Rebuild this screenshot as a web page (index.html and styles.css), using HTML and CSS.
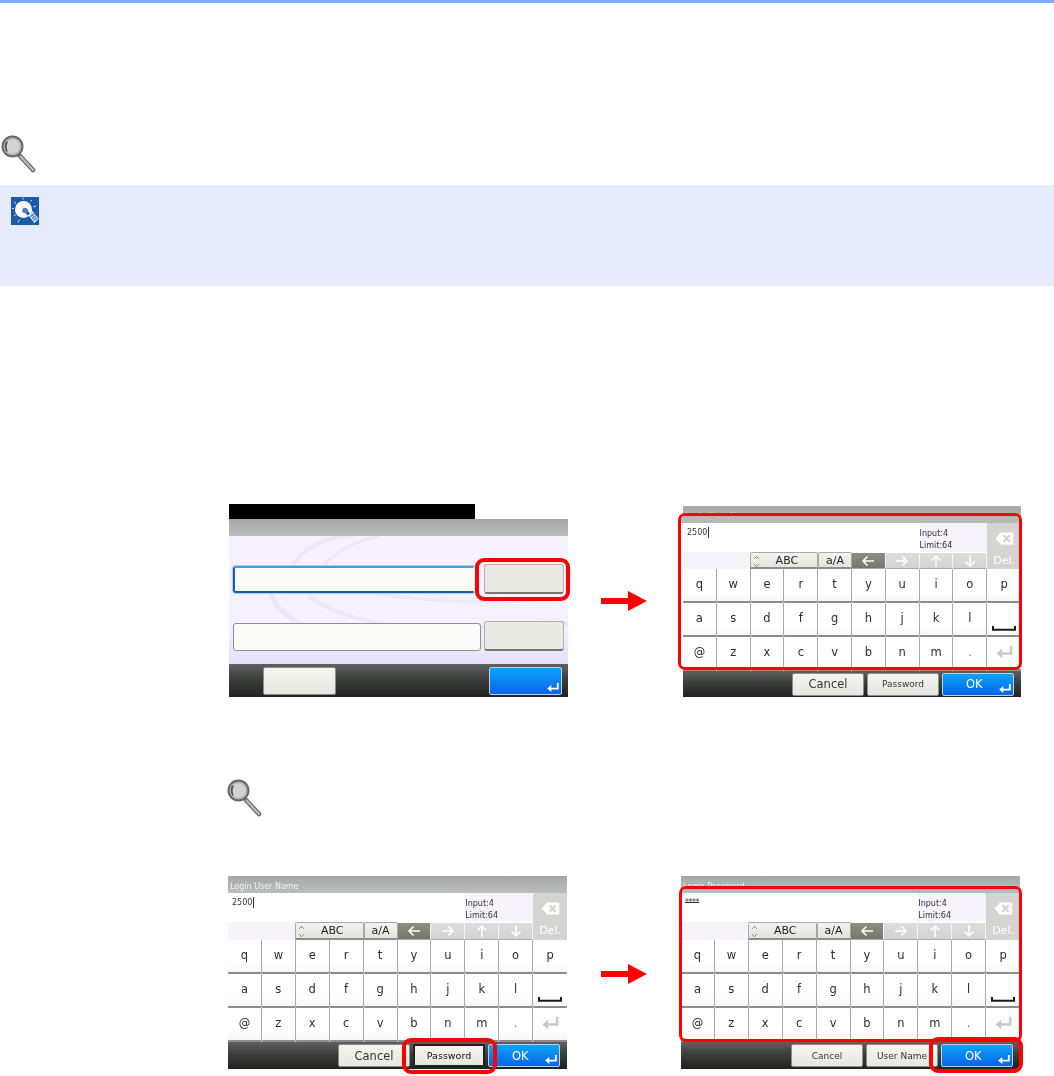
FILE: index.html
```html
<!DOCTYPE html>
<html lang="en">
<head>
<meta charset="utf-8">
<title>Login keyboard steps</title>
<link rel="stylesheet" href="styles.css">
</head>
<body>
<svg class="svg-defs" aria-hidden="true">
  <defs>
    <symbol id="loupe" viewBox="0 0 35 38">
      <path d="M19 21 L32 35" stroke="#666" stroke-width="4.600" stroke-linecap="round" fill="none"/>
      <path d="M19.500 21.500 L32 35" stroke="#bdbdbd" stroke-width="2.200" stroke-linecap="round" fill="none"/>
      <circle cx="11.500" cy="11.500" r="10" fill="#d2d2d2" stroke="#666" stroke-width="2"/>
      <circle cx="11.500" cy="11.500" r="8" fill="none" stroke="#a0a0a0" stroke-width="1"/>
      <path d="M6 6.500 Q3.500 11.500 6 16.500" stroke="#555" stroke-width="1.800" fill="none"/>
    </symbol>
    <symbol id="enter" viewBox="0 0 20 16">
      <path d="M17 1.500 V9.500 H5" fill="none" stroke="currentColor" stroke-width="2.600"/>
      <path d="M7.500 4.500 L1.500 9.500 L7.500 14.500 Z" fill="currentColor"/>
    </symbol>
    <symbol id="space" viewBox="0 0 24 5">
      <path d="M1 0 V3.800 H23 V0" fill="none" stroke="#1c1c1c" stroke-width="2"/>
    </symbol>
    <symbol id="backspace" viewBox="0 0 20 14">
      <path d="M6 0.500 H19.500 V13.500 H6 L0.500 7 Z" fill="#fff"/>
      <path d="M9 3.500 L15.500 10.500 M15.500 3.500 L9 10.500" stroke="#d3d4d0" stroke-width="2.200"/>
    </symbol>
    <symbol id="arrow-left" viewBox="0 0 14 12">
      <path d="M13 6 H2 M6.500 1.500 L2 6 L6.500 10.500" fill="none" stroke="currentColor" stroke-width="1.500"/>
    </symbol>
    <symbol id="arrow-right" viewBox="0 0 14 12">
      <path d="M1 6 H12 M7.500 1.500 L12 6 L7.500 10.500" fill="none" stroke="currentColor" stroke-width="1.500"/>
    </symbol>
    <symbol id="arrow-up" viewBox="0 0 12 14">
      <path d="M6 13 V2 M1.500 6.500 L6 2 L10.500 6.500" fill="none" stroke="currentColor" stroke-width="1.500"/>
    </symbol>
    <symbol id="arrow-down" viewBox="0 0 12 14">
      <path d="M6 1 V12 M1.500 7.500 L6 12 L10.500 7.500" fill="none" stroke="currentColor" stroke-width="1.500"/>
    </symbol>
    <symbol id="updown" viewBox="0 0 7 14">
      <path d="M1 4 L3.500 1.500 L6 4 M1 10 L3.500 12.500 L6 10" fill="none" stroke="#6f6f6f" stroke-width="1"/>
    </symbol>
    <symbol id="red-arrow" viewBox="0 0 46 20">
      <path d="M0 7 H27 V0 L46 10 L27 20 V13 H0 Z" fill="#f00"/>
    </symbol>
  </defs>
</svg>

<header class="top-bar"></header>

<svg class="loupe loupe-page"><use href="#loupe"/></svg>

<section class="note">
  <svg class="bulb" viewBox="0 0 28 28" aria-hidden="true">
    <rect width="28" height="28" fill="#1a5bab"/>
    <path d="M17 17 L23.500 25.500 L27 21.500 L20 13 Z" fill="#a9c2e4" stroke="#fff" stroke-width="1"/>
    <circle cx="12.500" cy="12.500" r="8.500" fill="#fff"/>
    <path d="M19.500 19.500 L24 16.500 M21 21.500 L25.500 18.500 M22.500 23.500 L26.500 20.500" stroke="#1a5bab" stroke-width=".8"/>
    <path d="M12.500 13.500 l2.500 -2 l4 5 l-2.500 2 Z" fill="#1a5bab"/>
    <circle cx="14" cy="13.500" r="2.800" fill="#4f80bf"/>
    <path d="M3 5 L5 6.500 M1 11.500 H3 M3 19 L5 17.500 M7 25.500 L8.500 22.500 M12 .5 V2.500 M21 3 L19.500 4.500 M25 9 L22.500 10" stroke="#d5e2f3" stroke-width="1"/>
  </svg>
</section>

<section class="step step-first">
  <div class="wrap">
    <div class="screen screen-login">
      <div class="login-head"><div class="login-black"></div></div>
      <div class="login-title"></div>
      <div class="login-body">
        <svg class="swirl" viewBox="0 0 339 128" preserveAspectRatio="none" aria-hidden="true">
          <g fill="none" stroke="#eee7fa">
            <path d="M60 55 C55 20 90 0 125 0" stroke-width="4"/>
            <path d="M85 50 C90 25 115 8 150 0" stroke-width="3"/>
            <path d="M40 55 C55 95 120 112 190 100 C250 90 310 85 339 88" stroke-width="5"/>
            <path d="M80 60 C120 90 190 95 250 90" stroke-width="4"/>
            <path d="M120 50 C160 65 260 70 339 62" stroke-width="3"/>
          </g>
        </svg>
        <div class="login-row">
          <div class="login-input login-input-focus"></div>
          <div class="login-btn"></div>
        </div>
        <div class="login-row">
          <div class="login-input"></div>
          <div class="login-btn"></div>
        </div>
      </div>
      <div class="footer footer-login">
        <div class="foot-btn foot-btn-login"></div>
        <div class="foot-btn foot-ok"><svg class="ok-enter"><use href="#enter"/></svg></div>
      </div>
    </div>
    <div class="frame frame-thick frame-login-btn"></div>
  </div>

  <svg class="red-arrow"><use href="#red-arrow"/></svg>

  <div class="wrap wrap-short">
    <div class="screen screen-short">
      <div class="title"><span class="title-text">Login User Name</span></div>
      <div class="kb-top">
        <div class="field"><span class="value">2500</span><span class="caret"></span></div>
        <div class="count">Input:4<br>Limit:64</div>
        <div class="del"><svg class="del-icon"><use href="#backspace"/></svg><span>Del.</span></div>
        <div class="blank"></div>
        <div class="tab tab-abc"><svg class="updown"><use href="#updown"/></svg>ABC</div>
        <div class="tab">a/A</div>
        <div class="nav nav-active"><svg class="nav-h"><use href="#arrow-left"/></svg></div>
        <div class="nav"><svg class="nav-h"><use href="#arrow-right"/></svg></div>
        <div class="nav"><svg class="nav-v"><use href="#arrow-up"/></svg></div>
        <div class="nav"><svg class="nav-v"><use href="#arrow-down"/></svg></div>
      </div>
      <div class="keys">
        <div class="key">q</div><div class="key">w</div><div class="key">e</div><div class="key">r</div><div class="key">t</div><div class="key">y</div><div class="key">u</div><div class="key">i</div><div class="key">o</div><div class="key">p</div>
        <div class="key">a</div><div class="key">s</div><div class="key">d</div><div class="key">f</div><div class="key">g</div><div class="key">h</div><div class="key">j</div><div class="key">k</div><div class="key">l</div><div class="key key-space"><svg class="space-icon"><use href="#space"/></svg></div>
        <div class="key">@</div><div class="key">z</div><div class="key">x</div><div class="key">c</div><div class="key">v</div><div class="key">b</div><div class="key">n</div><div class="key">m</div><div class="key key-dot">.</div><div class="key key-enter"><svg class="enter-icon"><use href="#enter"/></svg></div>
      </div>
      <div class="footer">
        <div class="foot-btn">Cancel</div>
        <div class="foot-btn foot-small">Password</div>
        <div class="foot-btn foot-ok">OK<svg class="ok-enter"><use href="#enter"/></svg></div>
      </div>
    </div>
    <div class="frame frame-keys-a"></div>
  </div>
</section>

<svg class="loupe loupe-step"><use href="#loupe"/></svg>

<section class="step step-second">
  <div class="wrap">
    <div class="screen">
      <div class="title"><span class="title-text">Login User Name</span></div>
      <div class="kb-top">
        <div class="field"><span class="value">2500</span><span class="caret"></span></div>
        <div class="count">Input:4<br>Limit:64</div>
        <div class="del"><svg class="del-icon"><use href="#backspace"/></svg><span>Del.</span></div>
        <div class="blank"></div>
        <div class="tab tab-abc"><svg class="updown"><use href="#updown"/></svg>ABC</div>
        <div class="tab">a/A</div>
        <div class="nav nav-active"><svg class="nav-h"><use href="#arrow-left"/></svg></div>
        <div class="nav"><svg class="nav-h"><use href="#arrow-right"/></svg></div>
        <div class="nav"><svg class="nav-v"><use href="#arrow-up"/></svg></div>
        <div class="nav"><svg class="nav-v"><use href="#arrow-down"/></svg></div>
      </div>
      <div class="keys">
        <div class="key">q</div><div class="key">w</div><div class="key">e</div><div class="key">r</div><div class="key">t</div><div class="key">y</div><div class="key">u</div><div class="key">i</div><div class="key">o</div><div class="key">p</div>
        <div class="key">a</div><div class="key">s</div><div class="key">d</div><div class="key">f</div><div class="key">g</div><div class="key">h</div><div class="key">j</div><div class="key">k</div><div class="key">l</div><div class="key key-space"><svg class="space-icon"><use href="#space"/></svg></div>
        <div class="key">@</div><div class="key">z</div><div class="key">x</div><div class="key">c</div><div class="key">v</div><div class="key">b</div><div class="key">n</div><div class="key">m</div><div class="key key-dot">.</div><div class="key key-enter"><svg class="enter-icon"><use href="#enter"/></svg></div>
      </div>
      <div class="footer">
        <div class="foot-btn">Cancel</div>
        <div class="foot-btn foot-small foot-selected">Password</div>
        <div class="foot-btn foot-ok">OK<svg class="ok-enter"><use href="#enter"/></svg></div>
      </div>
    </div>
    <div class="frame frame-thick frame-password"></div>
  </div>

  <svg class="red-arrow red-arrow-low"><use href="#red-arrow"/></svg>

  <div class="wrap wrap-last">
    <div class="screen">
      <div class="title"><span class="title-text">Login Password</span></div>
      <div class="kb-top">
        <div class="field"><span class="value value-stars">****</span></div>
        <div class="count">Input:4<br>Limit:64</div>
        <div class="del"><svg class="del-icon"><use href="#backspace"/></svg><span>Del.</span></div>
        <div class="blank"></div>
        <div class="tab tab-abc"><svg class="updown"><use href="#updown"/></svg>ABC</div>
        <div class="tab">a/A</div>
        <div class="nav nav-active"><svg class="nav-h"><use href="#arrow-left"/></svg></div>
        <div class="nav"><svg class="nav-h"><use href="#arrow-right"/></svg></div>
        <div class="nav"><svg class="nav-v"><use href="#arrow-up"/></svg></div>
        <div class="nav"><svg class="nav-v"><use href="#arrow-down"/></svg></div>
      </div>
      <div class="keys">
        <div class="key">q</div><div class="key">w</div><div class="key">e</div><div class="key">r</div><div class="key">t</div><div class="key">y</div><div class="key">u</div><div class="key">i</div><div class="key">o</div><div class="key">p</div>
        <div class="key">a</div><div class="key">s</div><div class="key">d</div><div class="key">f</div><div class="key">g</div><div class="key">h</div><div class="key">j</div><div class="key">k</div><div class="key">l</div><div class="key key-space"><svg class="space-icon"><use href="#space"/></svg></div>
        <div class="key">@</div><div class="key">z</div><div class="key">x</div><div class="key">c</div><div class="key">v</div><div class="key">b</div><div class="key">n</div><div class="key">m</div><div class="key key-dot">.</div><div class="key key-enter"><svg class="enter-icon"><use href="#enter"/></svg></div>
      </div>
      <div class="footer">
        <div class="foot-btn foot-small foot-cancel-small">Cancel</div>
        <div class="foot-btn foot-small">User Name</div>
        <div class="foot-btn foot-ok">OK<svg class="ok-enter"><use href="#enter"/></svg></div>
      </div>
    </div>
    <div class="frame frame-keys-b"></div>
    <div class="frame frame-thick frame-ok"></div>
  </div>
</section>
</body>
</html>
```

FILE: styles.css
```css
* { box-sizing: border-box; }

html, body { margin: 0; padding: 0; background: #fff; }

body {
  font-family: "DejaVu Sans", "Liberation Sans", sans-serif;
  color: #222;
  min-height: 1076px;
}

.svg-defs { display: block; width: 0; height: 0; }

.top-bar { height: 3px; background: #7fadf6; }

.loupe { display: block; width: 35px; height: 38px; }
.loupe-page { margin: 132px 0 0 1px; }
.loupe-step { margin: 82px 0 0 227px; }

.note {
  height: 101px;
  margin-top: 12px;
  padding: 12px 11px;
  background: #e6ecfb;
}
.bulb { display: block; width: 28px; height: 28px; }

.step { display: flex; align-items: flex-end; }
.step-first { margin-top: 218px; padding-left: 229px; height: 193px; }
.step-second { margin-top: 59px; padding-left: 228px; height: 193px; }

.wrap { position: relative; width: 339px; flex: none; }
.wrap-short { margin-left: 36px; width: 338px; }
.wrap-last { margin-left: 34px; }

.red-arrow { flex: none; width: 46px; height: 20px; margin: 0 0 86px 33px; }
.red-arrow-low { margin: 0 0 85px 34px; }

.screen {
  display: flex;
  flex-direction: column;
  width: 339px;
  height: 193px;
  background: #fff;
  filter: blur(.5px);
}
.screen-short { width: 338px; height: 191px; }

/* login screen */
.login-head { height: 15px; }
.login-black { width: 246px; height: 15px; background: #000; }
.login-title {
  height: 17px;
  background: linear-gradient(#a4a7a7, #bcbebd);
}
.login-body {
  position: relative;
  height: 128px;
  padding: 28px 4px 0 4px;
  display: flex;
  flex-direction: column;
  gap: 27px;
  background: linear-gradient(#f6f1ff 70%, #e6def8);
}
.swirl { position: absolute; inset: 0; width: 100%; height: 100%; }
.login-row { position: relative; display: flex; gap: 3px; height: 30px; align-items: stretch; }
.login-input {
  width: 248px;
  margin-top: 2px;
  border: 1px solid #8f8f8f;
  border-radius: 3px;
  background: #fbfbf9;
}
.login-input-focus {
  height: 27px;
  margin-right: 6px;
  width: 242px;
  border: 2px solid #0b5cc0;
  border-top-color: #2ba6e4;
  border-right-color: transparent;
  box-shadow: 0 0 0 1px #c3cbd6;
}
.login-btn {
  width: 80px;
  margin-left: auto;
  border: 1px solid #b3b3ae;
  border-bottom: 2px solid #777;
  border-radius: 3px;
  background: #eaeae4;
}

/* keyboard screens */
.title {
  height: 17px;
  padding: 5px 0 0 2px;
  background: linear-gradient(#a5a8a8, #bcbebd);
  color: #f2f2f2;
  font-size: 8px;
  line-height: 11px;
}
.title-text { display: block; white-space: nowrap; }

.kb-top {
  display: grid;
  grid-template-columns: repeat(10, 1fr);
  grid-template-rows: 29px 18px;
  background: #fff;
}
.screen-short .kb-top { grid-template-rows: 29px 17px; }

.field {
  grid-column: span 7;
  display: flex;
  align-items: flex-start;
  padding: 4px 0 0 4px;
  background: #fff;
  font-size: 8px;
  line-height: 11px;
  color: #333;
}
.value-stars { letter-spacing: -.5px; text-decoration: line-through; }
.caret { width: 1px; height: 11px; margin-left: 1px; background: #333; }

.count {
  grid-column: span 2;
  padding: 5px 0 0 0;
  background: #f7f3fb;
  font-size: 8px;
  line-height: 12px;
  color: #333;
}
.del {
  grid-column: 10;
  grid-row: 1 / span 2;
  display: flex;
  flex-direction: column;
  align-items: center;
  padding-top: 9px;
  background: #d4d5d1;
  color: #fff;
  font-size: 11px;
  line-height: 13px;
}
.del-icon { width: 19px; height: 13px; margin-bottom: 9px; flex: none; }

.blank { grid-column: span 2; background: #f7f3fb; }

.tab {
  position: relative;
  display: flex;
  align-items: center;
  justify-content: center;
  border: 1px solid #a9a9a4;
  border-bottom: 2px solid #8e8e88;
  border-radius: 2px 2px 0 0;
  background: linear-gradient(#f3f3ef, #e4e4de);
  font-size: 11px;
}
.tab-abc { grid-column: span 2; margin-left: -1px; padding-left: 6px; }
.updown { position: absolute; left: 2px; top: 2px; width: 7px; height: 13px; }

.nav {
  display: flex;
  align-items: center;
  justify-content: center;
  margin-top: 1px;
  border-right: 1px solid #f4f4f4;
  border-bottom: 1px solid #aaa;
  background: linear-gradient(#dcdeda, #d2d4d0);
  color: #fff;
}
.nav-active { background: linear-gradient(#8d8d80, #77776b); }
.nav-h { width: 14px; height: 12px; }
.nav-v { width: 12px; height: 14px; }

.keys {
  display: grid;
  grid-template-columns: repeat(10, 1fr);
  grid-auto-rows: 34px;
  background: #fff;
}
.key {
  display: flex;
  align-items: center;
  justify-content: center;
  padding-bottom: 2px;
  border-right: 1px solid #a9a9a9;
  border-bottom: 2px solid #8c8c8c;
  border-radius: 1px;
  background: linear-gradient(#fff 70%, #f7f7f7);
  font-size: 11.500px;
  color: #2c2c2c;
}
.key:nth-child(10n) { border-right: 0; }
.key-space { align-items: flex-end; padding-bottom: 4px; }
.space-icon { width: 24px; height: 5px; }
.key-dot { color: #777; }
.key-enter { color: #c9c9c9; }
.enter-icon { width: 19px; height: 16px; }

.footer {
  flex: 1;
  display: flex;
  align-items: center;
  justify-content: flex-end;
  gap: 3px;
  padding: 0 7px 0 0;
  background: linear-gradient(#5f605f, #3c3e3c 45%, #1f2320);
}
.footer-login { justify-content: flex-start; gap: 153px; padding: 0 0 0 34px; }

.foot-btn {
  position: relative;
  display: flex;
  align-items: center;
  justify-content: center;
  width: 72px;
  height: 23px;
  border: 1px solid #8f8f8a;
  border-radius: 2px;
  background: linear-gradient(#f5f5f1, #e7e7e1);
  font-size: 11.500px;
  color: #333;
}
.foot-btn-login { width: 73px; height: 28px; }
.foot-small { font-size: 9px; }
.foot-selected { border: 2px solid #222; color: #111; font-size: 9.500px; }
.foot-ok {
  justify-content: flex-start;
  padding-left: 23px;
  border-color: #b9d4ea;
  background: linear-gradient(#0aa4f8, #0b63e6);
  color: #fff;
}
.footer-login .foot-ok { height: 28px; width: 73px; }
.ok-enter {
  position: absolute;
  right: 1px;
  bottom: 1px;
  width: 14px;
  height: 11px;
  color: #fff;
}

/* red call-out frames, drawn over the screens */
.frame {
  position: absolute;
  border: 3px solid #f00;
  border-radius: 7px;
}
.frame-thick { border-width: 4px; border-radius: 9px; }
.frame-login-btn { left: 246px; top: 54px; width: 95px; height: 43px; }
.frame-keys-a { left: -5px; top: 7px; width: 344px; height: 157px; }
.frame-keys-b { left: -2px; top: 10px; width: 343px; height: 156px; }
.frame-password { left: 174px; top: 162px; width: 95px; height: 36px; }
.frame-ok { left: 248px; top: 161px; width: 94px; height: 36px; }

/* the reference's frame hides the lower part of the title text */
.frame-keys-a::before,
.frame-keys-b::before {
  content: "";
  position: absolute;
  left: 0;
  right: 0;
  top: 0;
  background: #b8bab9;
  border-radius: 4px 4px 0 0;
}
.frame-keys-a::before { height: 7px; }
.frame-keys-b::before { height: 4px; }
```
